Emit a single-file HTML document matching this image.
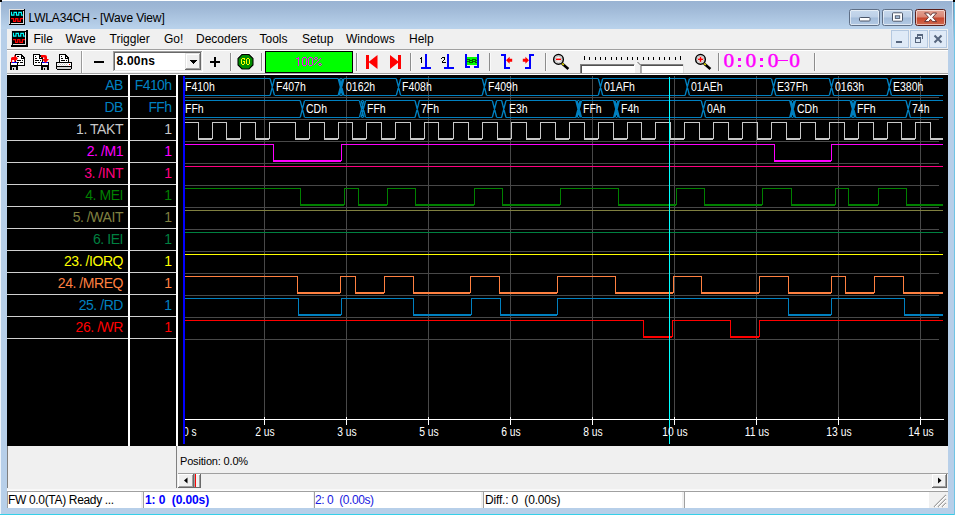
<!DOCTYPE html>
<html><head><meta charset="utf-8"><title>LWLA34CH - [Wave View]</title>
<style>

html,body{margin:0;padding:0;}
body{width:955px;height:515px;overflow:hidden;position:relative;background:#b7cfe9;font-family:"Liberation Sans",sans-serif;font-size:12px;color:#000;}
.abs{position:absolute;}
#title{left:0;top:0;width:955px;height:29px;background:linear-gradient(#98b2d2 0px,#9fb8d6 8px,#b9d2eb 28px);}
#titletxt{left:28.5px;top:10px;font-size:12px;line-height:16px;white-space:nowrap;letter-spacing:-0.14px;}
#menubar{left:7px;top:29px;width:941px;height:20px;background:#f0f0f0;}
.mi{position:absolute;top:32px;font-size:12px;line-height:14px;white-space:nowrap;}
#toolbar{left:7px;top:50px;width:941px;height:23px;background:#f0f0f0;}
.sep{position:absolute;top:53px;width:1px;height:18px;background:#8c8c8c;box-shadow:1px 0 0 #fafafa;}
#client{left:7px;top:75px;width:941px;height:371px;background:#000;}
.lbl{position:absolute;right:832px;font-size:14px;letter-spacing:-0.45px;line-height:16px;white-space:nowrap;text-align:right;}
.val{position:absolute;right:783.5px;font-size:14px;letter-spacing:-0.6px;line-height:16px;white-space:nowrap;text-align:right;}
.bt{position:absolute;font-size:12px;line-height:14px;color:#fff;white-space:nowrap;transform:scaleX(0.875);transform-origin:0 0;}
.tk{position:absolute;top:425px;width:60px;text-align:center;font-size:12px;line-height:14px;color:#fff;white-space:nowrap;transform:scaleX(0.86);transform-origin:50% 0;}
#below{left:7px;top:446px;width:941px;height:62px;background:#f0f0f0;}
.sf{position:absolute;top:491px;height:16px;background:#fff;border-top:1px solid #a0a0a0;border-left:1px solid #a0a0a0;box-sizing:border-box;height:17px;font-size:12px;line-height:17px;white-space:nowrap;overflow:hidden;}

</style></head><body>
<div class="abs" id="title"></div>
<div class="abs" style="left:0;top:0;width:955px;height:1px;background:#fdfeff"></div>
<div class="abs" style="left:0;top:0;width:1px;height:515px;background:#eef4fb"></div>
<div class="abs" style="left:0;top:514px;width:955px;height:1px;background:#35cfe8"></div>
<div class="abs" style="left:954px;top:0;width:1px;height:515px;background:#6fc4e4"></div>
<div class="abs" style="left:0;top:0;width:2px;height:2px;background:#000"></div>
<div class="abs" style="left:953px;top:0;width:2px;height:2px;background:#000"></div>
<svg class="abs" style="left:9px;top:9px" width="16" height="16" viewBox="0 0 16 16" shape-rendering="crispEdges"><rect x="0" y="0" width="16" height="16" fill="#000"/><rect x="0" y="0" width="15" height="1" fill="#e0e0e0"/><rect x="0" y="0" width="1" height="15" fill="#e0e0e0"/><rect x="14" y="2" width="1" height="13" fill="#e0e0e0"/><rect x="2" y="14" width="13" height="1" fill="#e0e0e0"/><path d="M2.5 2.8V6.1H4.97V3.3H7.45V6.1H9.78V3.3H12.4V6.1H13.9" stroke="#00ffff" stroke-width="1.15" fill="none" shape-rendering="auto"/><path d="M2 9.5H4.6V12.4H6.7V9.5H8.85V12.4H11.4V9.5H14" stroke="#ff0000" stroke-width="1.25" fill="none" shape-rendering="auto"/></svg>
<div class="abs" id="titletxt">LWLA34CH - [Wave View]</div>
<div class="abs" style="left:849px;top:9px;width:31px;height:17px;box-sizing:border-box;border:1px solid #5f6f86;border-radius:2.5px;background:linear-gradient(#c7d9ed 0,#bccfe6 48%,#a3bcda 52%,#b3cae4 100%);box-shadow:inset 0 0 0 1px rgba(255,255,255,.55)"></div>
<div class="abs" style="left:882px;top:9px;width:31px;height:17px;box-sizing:border-box;border:1px solid #5f6f86;border-radius:2.5px;background:linear-gradient(#c7d9ed 0,#bccfe6 48%,#a3bcda 52%,#b3cae4 100%);box-shadow:inset 0 0 0 1px rgba(255,255,255,.55)"></div>
<div class="abs" style="left:915px;top:9px;width:31px;height:17px;box-sizing:border-box;border:1px solid #5a1f1a;border-radius:2.5px;background:linear-gradient(#e3a394 0,#d98573 48%,#c8452b 52%,#cf6a50 100%);box-shadow:inset 0 0 0 1px rgba(255,255,255,.55)"></div>
<svg class="abs" style="left:849px;top:9px" width="97" height="17" viewBox="0 0 97 17"><rect x="10.5" y="8.5" width="10.5" height="3.5" rx="0.8" fill="#fff" stroke="#4a5568" stroke-width="1"/><rect x="43.5" y="3.8" width="10" height="8.4" rx="0.8" fill="#fff" stroke="#4a5568" stroke-width="1"/><rect x="46.3" y="6.8" width="4.4" height="2.6" fill="#a9c0dc" stroke="#4a5568" stroke-width="0.9"/><path d="M75.6 4l4 0l2 2.4l2-2.4l4 0l-3.9 4.3l3.9 4.3l-4 0l-2-2.4l-2 2.4l-4 0l3.9-4.3z" fill="#fff" stroke="#5a2a2a" stroke-width="0.9" stroke-linejoin="round"/></svg>
<div class="abs" style="left:953px;top:2px;width:1px;height:40px;background:linear-gradient(#6a88aa,#b7cfe9)"></div>
<div class="abs" style="left:952px;top:2px;width:1px;height:40px;background:linear-gradient(#dce8f5,#b7cfe9)"></div>
<div class="abs" id="menubar"></div>
<div class="abs" style="left:7px;top:49px;width:941px;height:1px;background:#a0a0a0"></div>
<svg class="abs" style="left:11px;top:30px" width="17" height="17" viewBox="0 0 17 17" shape-rendering="crispEdges"><rect x="0" y="0" width="17" height="17" fill="#000"/><rect x="0" y="0" width="15" height="1" fill="#e0e0e0"/><rect x="0" y="0" width="1" height="15" fill="#e0e0e0"/><rect x="14" y="2" width="1" height="13" fill="#e0e0e0"/><rect x="2" y="14" width="13" height="1" fill="#e0e0e0"/><path d="M2.5 2.8V6.1H4.97V3.3H7.45V6.1H9.78V3.3H12.4V6.1H13.9" stroke="#00ffff" stroke-width="1.15" fill="none" shape-rendering="auto"/><path d="M2 9.5H4.6V12.4H6.7V9.5H8.85V12.4H11.4V9.5H14" stroke="#ff0000" stroke-width="1.25" fill="none" shape-rendering="auto"/></svg>
<div class="mi" style="left:33.5px">File</div>
<div class="mi" style="left:65.5px">Wave</div>
<div class="mi" style="left:109.5px">Triggler</div>
<div class="mi" style="left:164px">Go!</div>
<div class="mi" style="left:196px">Decoders</div>
<div class="mi" style="left:259.5px">Tools</div>
<div class="mi" style="left:302px">Setup</div>
<div class="mi" style="left:346px">Windows</div>
<div class="mi" style="left:409px">Help</div>
<div class="abs" style="left:891px;top:30px;width:18px;height:18px;box-sizing:border-box;border:1px solid #b4c8e0;background:#dfeaf7"></div>
<div class="abs" style="left:910px;top:30px;width:18px;height:18px;box-sizing:border-box;border:1px solid #b4c8e0;background:#dfeaf7"></div>
<div class="abs" style="left:929px;top:30px;width:18px;height:18px;box-sizing:border-box;border:1px solid #b4c8e0;background:#dfeaf7"></div>
<svg class="abs" style="left:891px;top:30px" width="56" height="18" viewBox="0 0 56 18" shape-rendering="crispEdges"><rect x="5" y="11" width="6" height="2" fill="#56667e"/><rect x="26" y="4" width="6" height="2" fill="#56667e"/><rect x="31" y="4" width="1" height="5" fill="#56667e"/><rect x="26" y="4" width="1" height="3" fill="#56667e"/><rect x="24" y="7" width="6" height="2" fill="#56667e"/><rect x="24" y="7" width="1" height="6" fill="#56667e"/><rect x="29" y="7" width="1" height="6" fill="#56667e"/><rect x="24" y="12" width="6" height="1" fill="#56667e"/><path d="M43.5 5.5l7 7M50.5 5.5l-7 7" stroke="#56667e" stroke-width="2" shape-rendering="auto"/></svg>
<div class="abs" id="toolbar"></div>
<div class="abs" style="left:7px;top:50px;width:941px;height:1px;background:#fff"></div>
<div class="abs" style="left:7px;top:73px;width:941px;height:1px;background:#a0a0a0"></div>
<div class="abs" style="left:7px;top:74px;width:941px;height:1px;background:#fff"></div>
<div class="sep" style="left:81px;top:51px;height:22px;background:#9a9a9a;box-shadow:1px 0 0 #fff"></div>
<div class="sep" style="left:230px"></div>
<div class="sep" style="left:261px"></div>
<div class="sep" style="left:356px"></div>
<div class="sep" style="left:410px"></div>
<div class="sep" style="left:489px"></div>
<div class="sep" style="left:545px"></div>
<div class="sep" style="left:718px"></div>
<div class="sep" style="left:814px"></div>
<!-- toolbar icons -->
<svg class="abs" style="left:7px;top:50px" width="941" height="24" viewBox="7 50 941 24" shape-rendering="crispEdges">
<!-- icon1: load (floppy -> doc) -->
<g><path d="M15 54h6l4 4v8h-10z" fill="#fff" shape-rendering="auto"/><rect x="15" y="54" width="6" height="1" fill="#000"/><rect x="15" y="54" width="1" height="12" fill="#000"/><rect x="24" y="58" width="1" height="8" fill="#000"/><rect x="15" y="65" width="10" height="1" fill="#000"/><rect x="21" y="54" width="1" height="2" fill="#000"/><rect x="22" y="55" width="1" height="2" fill="#000"/><rect x="23" y="56" width="1" height="2" fill="#000"/><rect x="24" y="57" width="1" height="2" fill="#000"/><rect x="21" y="55" width="1" height="3" fill="#000"/><rect x="21" y="58" width="3" height="1" fill="#000"/><rect x="17" y="56" width="2" height="1" fill="#000"/><rect x="17" y="60" width="4" height="1" fill="#000"/><rect x="22" y="60" width="1" height="1" fill="#000"/><rect x="17" y="62" width="2" height="1" fill="#000"/><rect x="20" y="62" width="3" height="1" fill="#000"/><rect x="10" y="62" width="8" height="8" fill="#000"/><rect x="12" y="62" width="5" height="1" fill="#0000ff"/><rect x="11" y="63" width="6" height="2" fill="#fff"/><rect x="12" y="67" width="4" height="3" fill="#d8d8d8"/><rect x="13" y="68" width="1" height="2" fill="#000"/><rect x="12" y="60" width="2" height="2" fill="#fff"/><path d="M11 63V58.500Q11 57 12.500 57H14.200V54.800L18 58.600L14.200 62.500V60H12.200V62H11.900V63Z" fill="#ff0000" shape-rendering="auto"/></g>
<!-- icon2: save (doc -> floppy) -->
<g><path d="M33 54h6l4 4v8h-10z" fill="#fff" shape-rendering="auto"/><rect x="33" y="54" width="6" height="1" fill="#000"/><rect x="33" y="54" width="1" height="12" fill="#000"/><rect x="42" y="58" width="1" height="8" fill="#000"/><rect x="33" y="65" width="10" height="1" fill="#000"/><rect x="39" y="54" width="1" height="2" fill="#000"/><rect x="40" y="55" width="1" height="2" fill="#000"/><rect x="41" y="56" width="1" height="2" fill="#000"/><rect x="42" y="57" width="1" height="2" fill="#000"/><rect x="39" y="55" width="1" height="3" fill="#000"/><rect x="39" y="58" width="3" height="1" fill="#000"/><rect x="35" y="56" width="1" height="1" fill="#000"/><rect x="35" y="58" width="2" height="1" fill="#000"/><rect x="35" y="60" width="4" height="1" fill="#000"/><rect x="40" y="60" width="1" height="1" fill="#000"/><rect x="35" y="62" width="2" height="1" fill="#000"/><rect x="38" y="62" width="2" height="1" fill="#000"/><rect x="33" y="65" width="1" height="1" fill="#f0f0f0"/><rect x="41" y="62" width="8" height="8" fill="#000"/><rect x="42" y="62" width="6" height="1" fill="#0000ff"/><rect x="42" y="63" width="6" height="2" fill="#fff"/><rect x="43" y="67" width="4" height="3" fill="#d8d8d8"/><rect x="44" y="68" width="1" height="2" fill="#000"/><path d="M41 55H45Q47 55 47 57V59H49L45.500 63L42 59H44.300V57.600H41Z" fill="#ff0000" shape-rendering="auto"/></g>
<!-- icon3: print -->
<g><path d="M59 54h6l4 4v5h-10z" fill="#fff" shape-rendering="auto"/><rect x="59" y="54" width="6" height="1" fill="#000"/><rect x="59" y="54" width="1" height="9" fill="#000"/><rect x="68" y="58" width="1" height="5" fill="#000"/><rect x="59" y="62" width="10" height="1" fill="#000"/><rect x="65" y="54" width="1" height="2" fill="#000"/><rect x="66" y="55" width="1" height="2" fill="#000"/><rect x="67" y="56" width="1" height="2" fill="#000"/><rect x="68" y="57" width="1" height="2" fill="#000"/><rect x="65" y="55" width="1" height="3" fill="#000"/><rect x="65" y="58" width="3" height="1" fill="#000"/><rect x="61" y="56" width="1" height="1" fill="#000"/><rect x="61" y="58" width="2" height="1" fill="#000"/><rect x="61" y="60" width="4" height="1" fill="#000"/><rect x="66" y="60" width="1" height="1" fill="#000"/><rect x="56" y="62" width="16" height="8" fill="#000"/><rect x="57" y="63" width="14" height="3" fill="#fff"/><rect x="57" y="67" width="14" height="2" fill="#d4d4d4"/><rect x="58" y="64" width="1" height="1" fill="#c0c0c0"/><rect x="60" y="64" width="1" height="1" fill="#c0c0c0"/><rect x="62" y="64" width="1" height="1" fill="#c0c0c0"/><rect x="64" y="64" width="1" height="1" fill="#c0c0c0"/><rect x="66" y="64" width="1" height="1" fill="#c0c0c0"/><rect x="57" y="63" width="1" height="1" fill="#e4e4e4"/><rect x="57" y="65" width="1" height="1" fill="#e4e4e4"/><rect x="59" y="63" width="1" height="1" fill="#e4e4e4"/><rect x="59" y="65" width="1" height="1" fill="#e4e4e4"/><rect x="61" y="63" width="1" height="1" fill="#e4e4e4"/><rect x="61" y="65" width="1" height="1" fill="#e4e4e4"/><rect x="63" y="63" width="1" height="1" fill="#e4e4e4"/><rect x="63" y="65" width="1" height="1" fill="#e4e4e4"/><rect x="65" y="63" width="1" height="1" fill="#e4e4e4"/><rect x="65" y="65" width="1" height="1" fill="#e4e4e4"/><rect x="67" y="63" width="1" height="1" fill="#e4e4e4"/><rect x="67" y="65" width="1" height="1" fill="#e4e4e4"/><rect x="69" y="64" width="1" height="1" fill="#ff0000"/><rect x="56" y="69" width="1" height="1" fill="#f0f0f0"/><rect x="71" y="69" width="1" height="1" fill="#f0f0f0"/></g>
<!-- minus / plus -->
<rect x="94" y="61" width="10" height="2" fill="#000"/>
<rect x="210" y="61" width="10" height="2" fill="#000"/><rect x="214" y="57" width="2" height="10" fill="#000"/>
<!-- combo box -->
<rect x="113" y="51" width="90" height="21" fill="#fff"/>
<rect x="113" y="51" width="90" height="1" fill="#a0a0a0"/><rect x="113" y="51" width="1" height="21" fill="#a0a0a0"/>
<rect x="114" y="52" width="88" height="1" fill="#696969"/><rect x="114" y="52" width="1" height="19" fill="#696969"/>
<rect x="113" y="71" width="90" height="1" fill="#fff"/><rect x="202" y="51" width="1" height="21" fill="#fff"/>
<rect x="114" y="70" width="88" height="1" fill="#e3e3e3"/><rect x="201" y="52" width="1" height="19" fill="#e3e3e3"/>
<rect x="185" y="53" width="16" height="17" fill="#f0f0f0"/>
<rect x="185" y="53" width="16" height="1" fill="#e3e3e3"/><rect x="185" y="53" width="1" height="17" fill="#e3e3e3"/>
<rect x="186" y="54" width="14" height="1" fill="#fff"/><rect x="186" y="54" width="1" height="15" fill="#fff"/>
<rect x="185" y="69" width="16" height="1" fill="#696969"/><rect x="200" y="53" width="1" height="17" fill="#696969"/>
<rect x="186" y="68" width="14" height="1" fill="#a0a0a0"/><rect x="199" y="54" width="1" height="15" fill="#a0a0a0"/>
<rect x="190" y="60" width="7" height="1" fill="#000"/><rect x="191" y="61" width="5" height="1" fill="#000"/><rect x="192" y="62" width="3" height="1" fill="#000"/><rect x="193" y="63" width="1" height="1" fill="#000"/>
<!-- GO -->
<path d="M241.800 53.500h7.400l4.300 4.300v7.400l-4.300 4.300h-7.400l-4.300-4.300v-7.400z" fill="none" stroke="#fff" stroke-width="1" shape-rendering="auto"/>
<path d="M242 54.500h7l4 4v6.500l-4 4h-7l-4-4v-6.500z" fill="#008c00" stroke="#000" stroke-width="1.100" shape-rendering="auto"/>
<g fill="#ffff00"><rect x="242" y="58" width="3" height="1"/><rect x="241" y="59" width="1" height="5"/><rect x="242" y="64" width="2" height="1"/><rect x="244" y="61" width="1" height="3"/><rect x="243" y="61" width="1" height="1"/><rect x="244" y="59" width="1" height="1"/><rect x="247" y="58" width="2" height="1"/><rect x="246" y="59" width="1" height="5"/><rect x="249" y="59" width="1" height="5"/><rect x="247" y="64" width="2" height="1"/></g>
<!-- progress -->
<rect x="265" y="51" width="88" height="22" fill="#000"/><rect x="266" y="52" width="86" height="20" fill="#00ff00"/>
<!-- red arrows -->
<rect x="366" y="55" width="3" height="14" fill="#ff0000"/>
<path d="M377.500 55v14l-9-7z" fill="#ff0000" shape-rendering="auto"/>
<rect x="398" y="55" width="3" height="14" fill="#ff0000"/>
<path d="M390 55v14l9-7z" fill="#ff0000" shape-rendering="auto"/>
<!-- cursor 1 / 2 -->
<rect x="425" y="54" width="2" height="14" fill="#0000ff"/><rect x="421" y="67" width="10" height="2" fill="#0000ff"/>
<rect x="421" y="57" width="1" height="6" fill="#000"/><rect x="420" y="58" width="1" height="1" fill="#000"/>
<rect x="447" y="54" width="2" height="14" fill="#0000ff"/><rect x="444" y="67" width="10" height="2" fill="#0000ff"/>
<rect x="442" y="57" width="3" height="1" fill="#000"/><rect x="444" y="58" width="1" height="2" fill="#000"/><rect x="443" y="60" width="1" height="1" fill="#000"/><rect x="442" y="61" width="1" height="1" fill="#000"/><rect x="442" y="62" width="4" height="1" fill="#000"/><rect x="441" y="58" width="1" height="1" fill="#000"/>
<!-- bracket w/ green -->
<rect x="465" y="54" width="2" height="14" fill="#0000ff"/><rect x="477" y="54" width="2" height="14" fill="#0000ff"/>
<rect x="465" y="66" width="5" height="2" fill="#0000ff"/><rect x="474" y="66" width="5" height="2" fill="#0000ff"/>
<rect x="467" y="57" width="10" height="8" fill="#00ff00"/>
<path d="M467 59.500h2l1 1h2l1-1h2l1 1h1M467 61.500h2l1 1h2l1-1h2l1 1h1" stroke="#006000" stroke-width="1" fill="none"/>
<!-- [<-  ->] -->
<rect x="504" y="54" width="2" height="15" fill="#0000ff"/><rect x="501" y="54" width="5" height="2" fill="#0000ff"/><rect x="504" y="67" width="6" height="2" fill="#0000ff"/>
<path d="M506 60.300l3.600-3.500v2h2.600v3h-2.600v2z" fill="#ff0000" shape-rendering="auto"/>
<rect x="529" y="54" width="2" height="15" fill="#0000ff"/><rect x="529" y="54" width="5" height="2" fill="#0000ff"/><rect x="525" y="67" width="6" height="2" fill="#0000ff"/>
<path d="M529 60.300l-3.600-3.500v2h-2.600v3h2.600v2z" fill="#ff0000" shape-rendering="auto"/>
<!-- magnifiers -->
<g shape-rendering="auto">
<path d="M562 63.600l6.400 5.400" stroke="#000" stroke-width="2.600"/><path d="M562 63.300l1.800 1.500" stroke="#e8e000" stroke-width="1.600"/>
<circle cx="558.500" cy="59.400" r="4.800" fill="#f4f4f4" stroke="#000" stroke-width="1.500"/><circle cx="558.500" cy="59.400" r="3.300" fill="none" stroke="#b8b8b8" stroke-width="0.900"/>
<rect x="556" y="58.600" width="5" height="1.500" fill="#ff0000"/>
<path d="M704 63.600l6.400 5.400" stroke="#000" stroke-width="2.600"/><path d="M704 63.300l1.800 1.500" stroke="#e8e000" stroke-width="1.600"/>
<circle cx="700.500" cy="59.400" r="4.800" fill="#f4f4f4" stroke="#000" stroke-width="1.500"/><circle cx="700.500" cy="59.400" r="3.300" fill="none" stroke="#b8b8b8" stroke-width="0.900"/>
<rect x="698" y="58.600" width="5" height="1.500" fill="#ff0000"/><rect x="699.750" y="56.900" width="1.500" height="5" fill="#ff0000"/>
</g>
<!-- slider -->
<g id="ticks"><rect x="584" y="56" width="1" height="4" fill="#000"/><rect x="589" y="57" width="1" height="3" fill="#000"/><rect x="595" y="57" width="1" height="3" fill="#000"/><rect x="600" y="57" width="1" height="3" fill="#000"/><rect x="605" y="57" width="1" height="3" fill="#000"/><rect x="611" y="57" width="1" height="3" fill="#000"/><rect x="616" y="57" width="1" height="3" fill="#000"/><rect x="621" y="57" width="1" height="3" fill="#000"/><rect x="627" y="57" width="1" height="3" fill="#000"/><rect x="632" y="57" width="1" height="3" fill="#000"/><rect x="637" y="57" width="1" height="3" fill="#000"/><rect x="643" y="57" width="1" height="3" fill="#000"/><rect x="648" y="57" width="1" height="3" fill="#000"/><rect x="653" y="57" width="1" height="3" fill="#000"/><rect x="659" y="57" width="1" height="3" fill="#000"/><rect x="664" y="57" width="1" height="3" fill="#000"/><rect x="669" y="57" width="1" height="3" fill="#000"/><rect x="675" y="57" width="1" height="3" fill="#000"/><rect x="680" y="56" width="1" height="4" fill="#000"/></g>
<rect x="580" y="64" width="104" height="9" fill="#fff"/>
<rect x="580" y="64" width="104" height="1" fill="#808080"/><rect x="580" y="64" width="1" height="9" fill="#808080"/>
<rect x="581" y="65" width="102" height="1" fill="#505050"/><rect x="581" y="65" width="1" height="8" fill="#505050"/>
<rect x="683" y="64" width="1" height="9" fill="#e0e0e0"/>
<path d="M634 65l3.500-3.500l3.500 3.500v8h-7z" fill="#f0f0f0" shape-rendering="auto"/>
<path d="M634.500 73v-8l3-3" stroke="#fff" stroke-width="1" fill="none" shape-rendering="auto"/>
<path d="M637.500 62l3.500 3.500v7.500" stroke="#606060" stroke-width="1" fill="none" shape-rendering="auto"/>
</svg>
<div class="abs" style="left:116.500px;top:54px;font-size:12px;line-height:14px;font-weight:bold;white-space:nowrap;letter-spacing:0.200px;">8.00ns</div>

<svg class="abs" style="left:290px;top:55px" width="40" height="14" viewBox="290 55 40 14" shape-rendering="crispEdges"><g fill="#ff00ff"><rect x="298" y="57" width="1" height="9"/><rect x="296" y="58" width="2" height="1"/><rect x="303" y="57" width="3" height="1"/><rect x="303" y="65" width="3" height="1"/><rect x="302" y="58" width="1" height="7"/><rect x="306" y="58" width="1" height="7"/><rect x="309" y="57" width="3" height="1"/><rect x="309" y="65" width="3" height="1"/><rect x="308" y="58" width="1" height="7"/><rect x="312" y="58" width="1" height="7"/><rect x="315" y="57" width="2" height="1"/><rect x="314" y="58" width="1" height="1"/><rect x="317" y="58" width="1" height="1"/><rect x="315" y="59" width="2" height="1"/><rect x="320" y="58" width="1" height="1"/><rect x="319" y="59" width="1" height="1"/><rect x="318" y="60" width="1" height="1"/><rect x="317" y="61" width="1" height="1"/><rect x="316" y="62" width="1" height="1"/><rect x="315" y="63" width="1" height="1"/><rect x="314" y="64" width="1" height="1"/><rect x="319" y="63" width="2" height="1"/><rect x="318" y="64" width="1" height="1"/><rect x="321" y="64" width="1" height="1"/><rect x="319" y="65" width="2" height="1"/></g></svg>
<svg class="abs" style="left:720px;top:50px" width="90" height="24" viewBox="720 50 90 24">
<g font-family="Liberation Serif, serif" font-size="19.3" fill="#ff00ff" stroke="#ff00ff" stroke-width="0.450">
<text x="723.600" y="67.200" textLength="10.700" lengthAdjust="spacingAndGlyphs">0</text>
<text x="745.600" y="67.200" textLength="10.700" lengthAdjust="spacingAndGlyphs">0</text>
<text x="767.800" y="67.200" textLength="10.700" lengthAdjust="spacingAndGlyphs">0</text>
<text x="789.200" y="67.200" textLength="10.700" lengthAdjust="spacingAndGlyphs">0</text>
</g>
<g fill="#ff00ff" shape-rendering="crispEdges">
<rect x="738" y="58" width="3" height="2.5"/><rect x="738" y="65" width="3" height="2"/>
<rect x="760" y="58" width="3" height="2.5"/><rect x="760" y="65" width="3" height="2"/>
<rect x="778" y="60" width="10" height="1"/>
</g></svg>

<div class="abs" id="client"></div>
<svg class="abs" style="left:0;top:0" width="955" height="515" viewBox="0 0 955 515" shape-rendering="crispEdges"><rect x="7" y="96" width="170" height="1" fill="#d0d0d0"/><rect x="7" y="118" width="170" height="1" fill="#d0d0d0"/><rect x="7" y="140" width="170" height="1" fill="#d0d0d0"/><rect x="7" y="162" width="170" height="1" fill="#d0d0d0"/><rect x="7" y="184" width="170" height="1" fill="#d0d0d0"/><rect x="7" y="206" width="170" height="1" fill="#d0d0d0"/><rect x="7" y="228" width="170" height="1" fill="#d0d0d0"/><rect x="7" y="250" width="170" height="1" fill="#d0d0d0"/><rect x="7" y="272" width="170" height="1" fill="#d0d0d0"/><rect x="7" y="294" width="170" height="1" fill="#d0d0d0"/><rect x="7" y="316" width="170" height="1" fill="#d0d0d0"/><rect x="7" y="338" width="170" height="1" fill="#d0d0d0"/><rect x="128" y="75" width="2" height="371" fill="#ffffff"/><rect x="176" y="75" width="2" height="371" fill="#ffffff"/>
<rect x="264" y="76" width="1" height="343" fill="#484848"/>
<rect x="346" y="76" width="1" height="343" fill="#484848"/>
<rect x="428" y="76" width="1" height="343" fill="#484848"/>
<rect x="510" y="76" width="1" height="343" fill="#484848"/>
<rect x="592" y="76" width="1" height="343" fill="#484848"/>
<rect x="674" y="76" width="1" height="343" fill="#484848"/>
<rect x="756" y="76" width="1" height="343" fill="#484848"/>
<rect x="838" y="76" width="1" height="343" fill="#484848"/>
<rect x="920" y="76" width="1" height="343" fill="#484848"/>
<rect x="185" y="97" width="754" height="1" fill="#484848"/>
<rect x="185" y="119" width="754" height="1" fill="#484848"/>
<rect x="185" y="141" width="754" height="1" fill="#484848"/>
<rect x="185" y="163" width="754" height="1" fill="#484848"/>
<rect x="185" y="185" width="754" height="1" fill="#484848"/>
<rect x="185" y="207" width="754" height="1" fill="#484848"/>
<rect x="185" y="229" width="754" height="1" fill="#484848"/>
<rect x="185" y="251" width="754" height="1" fill="#484848"/>
<rect x="185" y="273" width="754" height="1" fill="#484848"/>
<rect x="185" y="295" width="754" height="1" fill="#484848"/>
<rect x="185" y="317" width="754" height="1" fill="#484848"/>
<rect x="185" y="339" width="754" height="1" fill="#484848"/>
<rect x="185" y="78" width="85.1" height="1" fill="#0080c0"/>
<rect x="185" y="95" width="85.1" height="1" fill="#0080c0"/>
<rect x="274.5" y="78" width="63.7" height="1" fill="#0080c0"/>
<rect x="274.5" y="95" width="63.7" height="1" fill="#0080c0"/>
<rect x="340.4" y="78" width="1.3" height="1" fill="#0080c0"/>
<rect x="340.4" y="95" width="1.3" height="1" fill="#0080c0"/>
<path d="M339.5 82L342.6 82L341.9 87L342.6 92L339.5 92L340.2 87Z" fill="#0080c0" shape-rendering="auto"/>
<rect x="343.9" y="78" width="52.4" height="1" fill="#0080c0"/>
<rect x="343.9" y="95" width="52.4" height="1" fill="#0080c0"/>
<rect x="400.7" y="78" width="81.5" height="1" fill="#0080c0"/>
<rect x="400.7" y="95" width="81.5" height="1" fill="#0080c0"/>
<rect x="486.6" y="78" width="111.7" height="1" fill="#0080c0"/>
<rect x="486.6" y="95" width="111.7" height="1" fill="#0080c0"/>
<rect x="602.7" y="78" width="82.4" height="1" fill="#0080c0"/>
<rect x="602.7" y="95" width="82.4" height="1" fill="#0080c0"/>
<rect x="689.5" y="78" width="81.9" height="1" fill="#0080c0"/>
<rect x="689.5" y="95" width="81.9" height="1" fill="#0080c0"/>
<rect x="775.8" y="78" width="53.5" height="1" fill="#0080c0"/>
<rect x="775.8" y="95" width="53.5" height="1" fill="#0080c0"/>
<rect x="833.7" y="78" width="53.4" height="1" fill="#0080c0"/>
<rect x="833.7" y="95" width="53.4" height="1" fill="#0080c0"/>
<rect x="891.5" y="78" width="51.5" height="1" fill="#0080c0"/>
<rect x="891.5" y="95" width="51.5" height="1" fill="#0080c0"/>
<path d="M270.1 78.5L274.5 95.5M270.1 95.5L274.5 78.5M338.2 78.5L342.6 95.5M338.2 95.5L342.6 78.5M339.5 78.5L343.9 95.5M339.5 95.5L343.9 78.5M396.3 78.5L400.7 95.5M396.3 95.5L400.7 78.5M482.2 78.5L486.6 95.5M482.2 95.5L486.6 78.5M598.3 78.5L602.7 95.5M598.3 95.5L602.7 78.5M685.1 78.5L689.5 95.5M685.1 95.5L689.5 78.5M771.4 78.5L775.8 95.5M771.4 95.5L775.8 78.5M829.3 78.5L833.7 95.5M829.3 95.5L833.7 78.5M887.1 78.5L891.5 95.5M887.1 95.5L891.5 78.5" stroke="#0080c0" stroke-width="1.3" fill="none" shape-rendering="auto"/>
<rect x="185" y="100" width="115.2" height="1" fill="#0080c0"/>
<rect x="185" y="117" width="115.2" height="1" fill="#0080c0"/>
<rect x="304.6" y="100" width="54.8" height="1" fill="#0080c0"/>
<rect x="304.6" y="117" width="54.8" height="1" fill="#0080c0"/>
<rect x="361.6" y="100" width="1.8" height="1" fill="#0080c0"/>
<rect x="361.6" y="117" width="1.8" height="1" fill="#0080c0"/>
<rect x="365.6" y="100" width="49.4" height="1" fill="#0080c0"/>
<rect x="365.6" y="117" width="49.4" height="1" fill="#0080c0"/>
<rect x="419.4" y="100" width="72.9" height="1" fill="#0080c0"/>
<rect x="419.4" y="117" width="72.9" height="1" fill="#0080c0"/>
<rect x="496.7" y="100" width="4.9" height="1" fill="#0080c0"/>
<rect x="496.7" y="117" width="4.9" height="1" fill="#0080c0"/>
<rect x="506" y="100" width="69.8" height="1" fill="#0080c0"/>
<rect x="506" y="117" width="69.8" height="1" fill="#0080c0"/>
<rect x="578" y="100" width="1.3" height="1" fill="#0080c0"/>
<rect x="578" y="117" width="1.3" height="1" fill="#0080c0"/>
<path d="M577.1 104L580.2 104L579.5 109L580.2 114L577.1 114L577.8 109Z" fill="#0080c0" shape-rendering="auto"/>
<rect x="581.5" y="100" width="32.1" height="1" fill="#0080c0"/>
<rect x="581.5" y="117" width="32.1" height="1" fill="#0080c0"/>
<rect x="615.8" y="100" width="1.3" height="1" fill="#0080c0"/>
<rect x="615.8" y="117" width="1.3" height="1" fill="#0080c0"/>
<path d="M614.9 104L618.0 104L617.3 109L618.0 114L614.9 114L615.6 109Z" fill="#0080c0" shape-rendering="auto"/>
<rect x="619.3" y="100" width="81.9" height="1" fill="#0080c0"/>
<rect x="619.3" y="117" width="81.9" height="1" fill="#0080c0"/>
<rect x="705.6" y="100" width="84.1" height="1" fill="#0080c0"/>
<rect x="705.6" y="117" width="84.1" height="1" fill="#0080c0"/>
<rect x="791.9" y="100" width="1.3" height="1" fill="#0080c0"/>
<rect x="791.9" y="117" width="1.3" height="1" fill="#0080c0"/>
<path d="M791.0 104L794.1 104L793.4 109L794.1 114L791.0 114L791.7 109Z" fill="#0080c0" shape-rendering="auto"/>
<rect x="795.4" y="100" width="54.8" height="1" fill="#0080c0"/>
<rect x="795.4" y="117" width="54.8" height="1" fill="#0080c0"/>
<rect x="852.4" y="100" width="1.3" height="1" fill="#0080c0"/>
<rect x="852.4" y="117" width="1.3" height="1" fill="#0080c0"/>
<path d="M851.5 104L854.6 104L853.9 109L854.6 114L851.5 114L852.2 109Z" fill="#0080c0" shape-rendering="auto"/>
<rect x="855.9" y="100" width="50.1" height="1" fill="#0080c0"/>
<rect x="855.9" y="117" width="50.1" height="1" fill="#0080c0"/>
<rect x="910.4" y="100" width="32.6" height="1" fill="#0080c0"/>
<rect x="910.4" y="117" width="32.6" height="1" fill="#0080c0"/>
<path d="M300.2 100.5L304.6 117.5M300.2 117.5L304.6 100.5M359.4 100.5L363.8 117.5M359.4 117.5L363.8 100.5M361.2 100.5L365.6 117.5M361.2 117.5L365.6 100.5M415.0 100.5L419.4 117.5M415.0 117.5L419.4 100.5M492.3 100.5L496.7 117.5M492.3 117.5L496.7 100.5M501.6 100.5L506.0 117.5M501.6 117.5L506.0 100.5M575.8 100.5L580.2 117.5M575.8 117.5L580.2 100.5M577.1 100.5L581.5 117.5M577.1 117.5L581.5 100.5M613.6 100.5L618.0 117.5M613.6 117.5L618.0 100.5M614.9 100.5L619.3 117.5M614.9 117.5L619.3 100.5M701.2 100.5L705.6 117.5M701.2 117.5L705.6 100.5M789.7 100.5L794.1 117.5M789.7 117.5L794.1 100.5M791.0 100.5L795.4 117.5M791.0 117.5L795.4 100.5M850.2 100.5L854.6 117.5M850.2 117.5L854.6 100.5M851.5 100.5L855.9 117.5M851.5 117.5L855.9 100.5M906.0 100.5L910.4 117.5M906.0 117.5L910.4 100.5" stroke="#0080c0" stroke-width="1.3" fill="none" shape-rendering="auto"/>
<rect x="185" y="122" width="14" height="1" fill="#c8c8c8"/>
<rect x="198" y="122" width="1" height="18" fill="#c8c8c8"/>
<rect x="198" y="138" width="15" height="1" fill="#c8c8c8"/>
<rect x="198" y="139" width="14" height="1" fill="#c8c8c8"/>
<rect x="212" y="122" width="1" height="17" fill="#c8c8c8"/>
<rect x="212" y="122" width="15" height="1" fill="#c8c8c8"/>
<rect x="226" y="122" width="1" height="18" fill="#c8c8c8"/>
<rect x="226" y="138" width="15" height="1" fill="#c8c8c8"/>
<rect x="226" y="139" width="14" height="1" fill="#c8c8c8"/>
<rect x="240" y="122" width="1" height="17" fill="#c8c8c8"/>
<rect x="240" y="122" width="16" height="1" fill="#c8c8c8"/>
<rect x="255" y="122" width="1" height="18" fill="#c8c8c8"/>
<rect x="255" y="138" width="15" height="1" fill="#c8c8c8"/>
<rect x="255" y="139" width="14" height="1" fill="#c8c8c8"/>
<rect x="269" y="122" width="1" height="17" fill="#c8c8c8"/>
<rect x="269" y="122" width="27" height="1" fill="#c8c8c8"/>
<rect x="295" y="122" width="1" height="18" fill="#c8c8c8"/>
<rect x="295" y="138" width="15" height="1" fill="#c8c8c8"/>
<rect x="295" y="139" width="14" height="1" fill="#c8c8c8"/>
<rect x="309" y="122" width="1" height="17" fill="#c8c8c8"/>
<rect x="309" y="122" width="16" height="1" fill="#c8c8c8"/>
<rect x="324" y="122" width="1" height="18" fill="#c8c8c8"/>
<rect x="324" y="138" width="15" height="1" fill="#c8c8c8"/>
<rect x="324" y="139" width="14" height="1" fill="#c8c8c8"/>
<rect x="338" y="122" width="1" height="17" fill="#c8c8c8"/>
<rect x="338" y="122" width="15" height="1" fill="#c8c8c8"/>
<rect x="352" y="122" width="1" height="18" fill="#c8c8c8"/>
<rect x="352" y="138" width="15" height="1" fill="#c8c8c8"/>
<rect x="352" y="139" width="14" height="1" fill="#c8c8c8"/>
<rect x="366" y="122" width="1" height="17" fill="#c8c8c8"/>
<rect x="366" y="122" width="16" height="1" fill="#c8c8c8"/>
<rect x="381" y="122" width="1" height="18" fill="#c8c8c8"/>
<rect x="381" y="138" width="15" height="1" fill="#c8c8c8"/>
<rect x="381" y="139" width="14" height="1" fill="#c8c8c8"/>
<rect x="395" y="122" width="1" height="17" fill="#c8c8c8"/>
<rect x="395" y="122" width="16" height="1" fill="#c8c8c8"/>
<rect x="410" y="122" width="1" height="18" fill="#c8c8c8"/>
<rect x="410" y="138" width="15" height="1" fill="#c8c8c8"/>
<rect x="410" y="139" width="14" height="1" fill="#c8c8c8"/>
<rect x="424" y="122" width="1" height="17" fill="#c8c8c8"/>
<rect x="424" y="122" width="15" height="1" fill="#c8c8c8"/>
<rect x="438" y="122" width="1" height="18" fill="#c8c8c8"/>
<rect x="438" y="138" width="16" height="1" fill="#c8c8c8"/>
<rect x="438" y="139" width="15" height="1" fill="#c8c8c8"/>
<rect x="453" y="122" width="1" height="17" fill="#c8c8c8"/>
<rect x="453" y="122" width="16" height="1" fill="#c8c8c8"/>
<rect x="468" y="122" width="1" height="18" fill="#c8c8c8"/>
<rect x="468" y="138" width="15" height="1" fill="#c8c8c8"/>
<rect x="468" y="139" width="14" height="1" fill="#c8c8c8"/>
<rect x="482" y="122" width="1" height="17" fill="#c8c8c8"/>
<rect x="482" y="122" width="16" height="1" fill="#c8c8c8"/>
<rect x="497" y="122" width="1" height="18" fill="#c8c8c8"/>
<rect x="497" y="138" width="15" height="1" fill="#c8c8c8"/>
<rect x="497" y="139" width="14" height="1" fill="#c8c8c8"/>
<rect x="511" y="122" width="1" height="17" fill="#c8c8c8"/>
<rect x="511" y="122" width="16" height="1" fill="#c8c8c8"/>
<rect x="526" y="122" width="1" height="18" fill="#c8c8c8"/>
<rect x="526" y="138" width="15" height="1" fill="#c8c8c8"/>
<rect x="526" y="139" width="14" height="1" fill="#c8c8c8"/>
<rect x="540" y="122" width="1" height="17" fill="#c8c8c8"/>
<rect x="540" y="122" width="16" height="1" fill="#c8c8c8"/>
<rect x="555" y="122" width="1" height="18" fill="#c8c8c8"/>
<rect x="555" y="138" width="15" height="1" fill="#c8c8c8"/>
<rect x="555" y="139" width="14" height="1" fill="#c8c8c8"/>
<rect x="569" y="122" width="1" height="17" fill="#c8c8c8"/>
<rect x="569" y="122" width="16" height="1" fill="#c8c8c8"/>
<rect x="584" y="122" width="1" height="18" fill="#c8c8c8"/>
<rect x="584" y="138" width="15" height="1" fill="#c8c8c8"/>
<rect x="584" y="139" width="14" height="1" fill="#c8c8c8"/>
<rect x="598" y="122" width="1" height="17" fill="#c8c8c8"/>
<rect x="598" y="122" width="16" height="1" fill="#c8c8c8"/>
<rect x="613" y="122" width="1" height="18" fill="#c8c8c8"/>
<rect x="613" y="138" width="15" height="1" fill="#c8c8c8"/>
<rect x="613" y="139" width="14" height="1" fill="#c8c8c8"/>
<rect x="627" y="122" width="1" height="17" fill="#c8c8c8"/>
<rect x="627" y="122" width="15" height="1" fill="#c8c8c8"/>
<rect x="641" y="122" width="1" height="18" fill="#c8c8c8"/>
<rect x="641" y="138" width="15" height="1" fill="#c8c8c8"/>
<rect x="641" y="139" width="14" height="1" fill="#c8c8c8"/>
<rect x="655" y="122" width="1" height="17" fill="#c8c8c8"/>
<rect x="655" y="122" width="16" height="1" fill="#c8c8c8"/>
<rect x="670" y="122" width="1" height="18" fill="#c8c8c8"/>
<rect x="670" y="138" width="15" height="1" fill="#c8c8c8"/>
<rect x="670" y="139" width="14" height="1" fill="#c8c8c8"/>
<rect x="684" y="122" width="1" height="17" fill="#c8c8c8"/>
<rect x="684" y="122" width="16" height="1" fill="#c8c8c8"/>
<rect x="699" y="122" width="1" height="18" fill="#c8c8c8"/>
<rect x="699" y="138" width="15" height="1" fill="#c8c8c8"/>
<rect x="699" y="139" width="14" height="1" fill="#c8c8c8"/>
<rect x="713" y="122" width="1" height="17" fill="#c8c8c8"/>
<rect x="713" y="122" width="16" height="1" fill="#c8c8c8"/>
<rect x="728" y="122" width="1" height="18" fill="#c8c8c8"/>
<rect x="728" y="138" width="15" height="1" fill="#c8c8c8"/>
<rect x="728" y="139" width="14" height="1" fill="#c8c8c8"/>
<rect x="742" y="122" width="1" height="17" fill="#c8c8c8"/>
<rect x="742" y="122" width="16" height="1" fill="#c8c8c8"/>
<rect x="757" y="122" width="1" height="18" fill="#c8c8c8"/>
<rect x="757" y="138" width="15" height="1" fill="#c8c8c8"/>
<rect x="757" y="139" width="14" height="1" fill="#c8c8c8"/>
<rect x="771" y="122" width="1" height="17" fill="#c8c8c8"/>
<rect x="771" y="122" width="16" height="1" fill="#c8c8c8"/>
<rect x="786" y="122" width="1" height="18" fill="#c8c8c8"/>
<rect x="786" y="138" width="15" height="1" fill="#c8c8c8"/>
<rect x="786" y="139" width="14" height="1" fill="#c8c8c8"/>
<rect x="800" y="122" width="1" height="17" fill="#c8c8c8"/>
<rect x="800" y="122" width="16" height="1" fill="#c8c8c8"/>
<rect x="815" y="122" width="1" height="18" fill="#c8c8c8"/>
<rect x="815" y="138" width="15" height="1" fill="#c8c8c8"/>
<rect x="815" y="139" width="14" height="1" fill="#c8c8c8"/>
<rect x="829" y="122" width="1" height="17" fill="#c8c8c8"/>
<rect x="829" y="122" width="16" height="1" fill="#c8c8c8"/>
<rect x="844" y="122" width="1" height="18" fill="#c8c8c8"/>
<rect x="844" y="138" width="15" height="1" fill="#c8c8c8"/>
<rect x="844" y="139" width="14" height="1" fill="#c8c8c8"/>
<rect x="858" y="122" width="1" height="17" fill="#c8c8c8"/>
<rect x="858" y="122" width="16" height="1" fill="#c8c8c8"/>
<rect x="873" y="122" width="1" height="18" fill="#c8c8c8"/>
<rect x="873" y="138" width="15" height="1" fill="#c8c8c8"/>
<rect x="873" y="139" width="14" height="1" fill="#c8c8c8"/>
<rect x="887" y="122" width="1" height="17" fill="#c8c8c8"/>
<rect x="887" y="122" width="15" height="1" fill="#c8c8c8"/>
<rect x="901" y="122" width="1" height="18" fill="#c8c8c8"/>
<rect x="901" y="138" width="15" height="1" fill="#c8c8c8"/>
<rect x="901" y="139" width="14" height="1" fill="#c8c8c8"/>
<rect x="915" y="122" width="1" height="17" fill="#c8c8c8"/>
<rect x="915" y="122" width="16" height="1" fill="#c8c8c8"/>
<rect x="930" y="122" width="1" height="18" fill="#c8c8c8"/>
<rect x="930" y="138" width="13" height="1" fill="#c8c8c8"/>
<rect x="930" y="139" width="13" height="1" fill="#c8c8c8"/>
<rect x="185" y="144" width="89" height="1" fill="#ff00ff"/>
<rect x="273" y="144" width="1" height="18" fill="#ff00ff"/>
<rect x="273" y="160" width="69" height="1" fill="#ff00ff"/>
<rect x="273" y="161" width="68" height="1" fill="#ff00ff"/>
<rect x="341" y="144" width="1" height="17" fill="#ff00ff"/>
<rect x="341" y="144" width="434" height="1" fill="#ff00ff"/>
<rect x="774" y="144" width="1" height="18" fill="#ff00ff"/>
<rect x="774" y="160" width="58" height="1" fill="#ff00ff"/>
<rect x="774" y="161" width="57" height="1" fill="#ff00ff"/>
<rect x="831" y="144" width="1" height="17" fill="#ff00ff"/>
<rect x="831" y="144" width="112" height="1" fill="#ff00ff"/>
<rect x="185" y="166" width="758" height="1" fill="#ff0080"/>
<rect x="185" y="188" width="116" height="1" fill="#008000"/>
<rect x="300" y="188" width="1" height="18" fill="#008000"/>
<rect x="300" y="204" width="45" height="1" fill="#008000"/>
<rect x="300" y="205" width="44" height="1" fill="#008000"/>
<rect x="344" y="188" width="1" height="17" fill="#008000"/>
<rect x="344" y="188" width="15" height="1" fill="#008000"/>
<rect x="358" y="188" width="1" height="18" fill="#008000"/>
<rect x="358" y="204" width="30" height="1" fill="#008000"/>
<rect x="358" y="205" width="29" height="1" fill="#008000"/>
<rect x="387" y="188" width="1" height="17" fill="#008000"/>
<rect x="387" y="188" width="29" height="1" fill="#008000"/>
<rect x="415" y="188" width="1" height="18" fill="#008000"/>
<rect x="415" y="204" width="60" height="1" fill="#008000"/>
<rect x="415" y="205" width="59" height="1" fill="#008000"/>
<rect x="474" y="188" width="1" height="17" fill="#008000"/>
<rect x="474" y="188" width="29" height="1" fill="#008000"/>
<rect x="502" y="188" width="1" height="18" fill="#008000"/>
<rect x="502" y="204" width="59" height="1" fill="#008000"/>
<rect x="502" y="205" width="58" height="1" fill="#008000"/>
<rect x="560" y="188" width="1" height="17" fill="#008000"/>
<rect x="560" y="188" width="59" height="1" fill="#008000"/>
<rect x="618" y="188" width="1" height="18" fill="#008000"/>
<rect x="618" y="204" width="59" height="1" fill="#008000"/>
<rect x="618" y="205" width="58" height="1" fill="#008000"/>
<rect x="676" y="188" width="1" height="17" fill="#008000"/>
<rect x="676" y="188" width="29" height="1" fill="#008000"/>
<rect x="704" y="188" width="1" height="18" fill="#008000"/>
<rect x="704" y="204" width="59" height="1" fill="#008000"/>
<rect x="704" y="205" width="58" height="1" fill="#008000"/>
<rect x="762" y="188" width="1" height="17" fill="#008000"/>
<rect x="762" y="188" width="30" height="1" fill="#008000"/>
<rect x="791" y="188" width="1" height="18" fill="#008000"/>
<rect x="791" y="204" width="45" height="1" fill="#008000"/>
<rect x="791" y="205" width="44" height="1" fill="#008000"/>
<rect x="835" y="188" width="1" height="17" fill="#008000"/>
<rect x="835" y="188" width="14" height="1" fill="#008000"/>
<rect x="848" y="188" width="1" height="18" fill="#008000"/>
<rect x="848" y="204" width="31" height="1" fill="#008000"/>
<rect x="848" y="205" width="30" height="1" fill="#008000"/>
<rect x="878" y="188" width="1" height="17" fill="#008000"/>
<rect x="878" y="188" width="29" height="1" fill="#008000"/>
<rect x="906" y="188" width="1" height="18" fill="#008000"/>
<rect x="906" y="204" width="37" height="1" fill="#008000"/>
<rect x="906" y="205" width="37" height="1" fill="#008000"/>
<rect x="185" y="210" width="758" height="1" fill="#808040"/>
<rect x="185" y="232" width="758" height="1" fill="#008040"/>
<rect x="185" y="254" width="758" height="1" fill="#ffff00"/>
<rect x="185" y="276" width="113" height="1" fill="#ff8040"/>
<rect x="297" y="276" width="1" height="18" fill="#ff8040"/>
<rect x="297" y="292" width="44" height="1" fill="#ff8040"/>
<rect x="297" y="293" width="43" height="1" fill="#ff8040"/>
<rect x="340" y="276" width="1" height="17" fill="#ff8040"/>
<rect x="340" y="276" width="16" height="1" fill="#ff8040"/>
<rect x="355" y="276" width="1" height="18" fill="#ff8040"/>
<rect x="355" y="292" width="30" height="1" fill="#ff8040"/>
<rect x="355" y="293" width="29" height="1" fill="#ff8040"/>
<rect x="384" y="276" width="1" height="17" fill="#ff8040"/>
<rect x="384" y="276" width="30" height="1" fill="#ff8040"/>
<rect x="413" y="276" width="1" height="18" fill="#ff8040"/>
<rect x="413" y="292" width="58" height="1" fill="#ff8040"/>
<rect x="413" y="293" width="57" height="1" fill="#ff8040"/>
<rect x="470" y="276" width="1" height="17" fill="#ff8040"/>
<rect x="470" y="276" width="30" height="1" fill="#ff8040"/>
<rect x="499" y="276" width="1" height="18" fill="#ff8040"/>
<rect x="499" y="292" width="59" height="1" fill="#ff8040"/>
<rect x="499" y="293" width="58" height="1" fill="#ff8040"/>
<rect x="557" y="276" width="1" height="17" fill="#ff8040"/>
<rect x="557" y="276" width="59" height="1" fill="#ff8040"/>
<rect x="615" y="276" width="1" height="18" fill="#ff8040"/>
<rect x="615" y="292" width="59" height="1" fill="#ff8040"/>
<rect x="615" y="293" width="58" height="1" fill="#ff8040"/>
<rect x="673" y="276" width="1" height="17" fill="#ff8040"/>
<rect x="673" y="276" width="29" height="1" fill="#ff8040"/>
<rect x="701" y="276" width="1" height="18" fill="#ff8040"/>
<rect x="701" y="292" width="59" height="1" fill="#ff8040"/>
<rect x="701" y="293" width="58" height="1" fill="#ff8040"/>
<rect x="759" y="276" width="1" height="17" fill="#ff8040"/>
<rect x="759" y="276" width="30" height="1" fill="#ff8040"/>
<rect x="788" y="276" width="1" height="18" fill="#ff8040"/>
<rect x="788" y="292" width="44" height="1" fill="#ff8040"/>
<rect x="788" y="293" width="43" height="1" fill="#ff8040"/>
<rect x="831" y="276" width="1" height="17" fill="#ff8040"/>
<rect x="831" y="276" width="15" height="1" fill="#ff8040"/>
<rect x="845" y="276" width="1" height="18" fill="#ff8040"/>
<rect x="845" y="292" width="30" height="1" fill="#ff8040"/>
<rect x="845" y="293" width="29" height="1" fill="#ff8040"/>
<rect x="874" y="276" width="1" height="17" fill="#ff8040"/>
<rect x="874" y="276" width="30" height="1" fill="#ff8040"/>
<rect x="903" y="276" width="1" height="18" fill="#ff8040"/>
<rect x="903" y="292" width="40" height="1" fill="#ff8040"/>
<rect x="903" y="293" width="40" height="1" fill="#ff8040"/>
<rect x="185" y="298" width="114" height="1" fill="#0080c0"/>
<rect x="298" y="298" width="1" height="18" fill="#0080c0"/>
<rect x="298" y="314" width="44" height="1" fill="#0080c0"/>
<rect x="298" y="315" width="43" height="1" fill="#0080c0"/>
<rect x="341" y="298" width="1" height="17" fill="#0080c0"/>
<rect x="341" y="298" width="73" height="1" fill="#0080c0"/>
<rect x="413" y="298" width="1" height="18" fill="#0080c0"/>
<rect x="413" y="314" width="59" height="1" fill="#0080c0"/>
<rect x="413" y="315" width="58" height="1" fill="#0080c0"/>
<rect x="471" y="298" width="1" height="17" fill="#0080c0"/>
<rect x="471" y="298" width="30" height="1" fill="#0080c0"/>
<rect x="500" y="298" width="1" height="18" fill="#0080c0"/>
<rect x="500" y="314" width="58" height="1" fill="#0080c0"/>
<rect x="500" y="315" width="57" height="1" fill="#0080c0"/>
<rect x="557" y="298" width="1" height="17" fill="#0080c0"/>
<rect x="557" y="298" width="232" height="1" fill="#0080c0"/>
<rect x="788" y="298" width="1" height="18" fill="#0080c0"/>
<rect x="788" y="314" width="44" height="1" fill="#0080c0"/>
<rect x="788" y="315" width="43" height="1" fill="#0080c0"/>
<rect x="831" y="298" width="1" height="17" fill="#0080c0"/>
<rect x="831" y="298" width="74" height="1" fill="#0080c0"/>
<rect x="904" y="298" width="1" height="18" fill="#0080c0"/>
<rect x="904" y="314" width="39" height="1" fill="#0080c0"/>
<rect x="904" y="315" width="39" height="1" fill="#0080c0"/>
<rect x="185" y="320" width="459" height="1" fill="#ff0000"/>
<rect x="643" y="320" width="1" height="18" fill="#ff0000"/>
<rect x="643" y="336" width="30" height="1" fill="#ff0000"/>
<rect x="643" y="337" width="29" height="1" fill="#ff0000"/>
<rect x="672" y="320" width="1" height="17" fill="#ff0000"/>
<rect x="672" y="320" width="59" height="1" fill="#ff0000"/>
<rect x="730" y="320" width="1" height="18" fill="#ff0000"/>
<rect x="730" y="336" width="30" height="1" fill="#ff0000"/>
<rect x="730" y="337" width="29" height="1" fill="#ff0000"/>
<rect x="759" y="320" width="1" height="17" fill="#ff0000"/>
<rect x="759" y="320" width="184" height="1" fill="#ff0000"/>
<rect x="185" y="419" width="759" height="1" fill="#ffffff"/>
<rect x="264" y="417" width="1" height="8" fill="#ffffff"/>
<rect x="346" y="417" width="1" height="8" fill="#ffffff"/>
<rect x="428" y="417" width="1" height="8" fill="#ffffff"/>
<rect x="510" y="417" width="1" height="8" fill="#ffffff"/>
<rect x="592" y="417" width="1" height="8" fill="#ffffff"/>
<rect x="674" y="417" width="1" height="8" fill="#ffffff"/>
<rect x="756" y="417" width="1" height="8" fill="#ffffff"/>
<rect x="838" y="417" width="1" height="8" fill="#ffffff"/>
<rect x="920" y="417" width="1" height="8" fill="#ffffff"/>
<rect x="183" y="76" width="2" height="368" fill="#0000ff"/>
<rect x="669" y="77" width="1" height="367" fill="#00ffff"/></svg>
<div class="lbl" style="top:77px;color:#0080c0">AB</div><div class="val" style="top:77px;color:#0080c0">F410h</div>
<div class="lbl" style="top:99px;color:#0080c0">DB</div><div class="val" style="top:99px;color:#0080c0">FFh</div>
<div class="lbl" style="top:121px;color:#c8c8c8">1. TAKT</div><div class="val" style="top:121px;color:#c8c8c8">1</div>
<div class="lbl" style="top:143px;color:#ff00ff">2. /M1</div><div class="val" style="top:143px;color:#ff00ff">1</div>
<div class="lbl" style="top:165px;color:#ff0080">3. /INT</div><div class="val" style="top:165px;color:#ff0080">1</div>
<div class="lbl" style="top:187px;color:#008000">4. MEI</div><div class="val" style="top:187px;color:#008000">1</div>
<div class="lbl" style="top:209px;color:#808040">5. /WAIT</div><div class="val" style="top:209px;color:#808040">1</div>
<div class="lbl" style="top:231px;color:#008040">6. IEI</div><div class="val" style="top:231px;color:#008040">1</div>
<div class="lbl" style="top:253px;color:#ffff00">23. /IORQ</div><div class="val" style="top:253px;color:#ffff00">1</div>
<div class="lbl" style="top:275px;color:#ff8040">24. /MREQ</div><div class="val" style="top:275px;color:#ff8040">1</div>
<div class="lbl" style="top:297px;color:#0080c0">25. /RD</div><div class="val" style="top:297px;color:#0080c0">1</div>
<div class="lbl" style="top:319px;color:#ff0000">26. /WR</div><div class="val" style="top:319px;color:#ff0000">1</div>
<div class="bt" style="left:184.5px;top:80px">F410h</div>
<div class="bt" style="left:275.5px;top:80px">F407h</div>
<div class="bt" style="left:345.5px;top:80px">0162h</div>
<div class="bt" style="left:401.5px;top:80px">F408h</div>
<div class="bt" style="left:487.5px;top:80px">F409h</div>
<div class="bt" style="left:603.5px;top:80px">01AFh</div>
<div class="bt" style="left:690.5px;top:80px">01AEh</div>
<div class="bt" style="left:776.5px;top:80px">E37Fh</div>
<div class="bt" style="left:834.5px;top:80px">0163h</div>
<div class="bt" style="left:892.5px;top:80px">E380h</div>
<div class="bt" style="left:184.5px;top:102px">FFh</div>
<div class="bt" style="left:305.5px;top:102px">CDh</div>
<div class="bt" style="left:366.5px;top:102px">FFh</div>
<div class="bt" style="left:420.5px;top:102px">7Fh</div>
<div class="bt" style="left:508.5px;top:102px">E3h</div>
<div class="bt" style="left:582.5px;top:102px">FFh</div>
<div class="bt" style="left:620.5px;top:102px">F4h</div>
<div class="bt" style="left:706.5px;top:102px">0Ah</div>
<div class="bt" style="left:797.0px;top:102px">CDh</div>
<div class="bt" style="left:856.5px;top:102px">FFh</div>
<div class="bt" style="left:911.5px;top:102px">74h</div>
<div class="tk" style="left:182.8px;width:auto;text-align:left;transform-origin:0 0;clip-path:inset(0 0 0 2.6px)">0 s</div>
<div class="tk" style="left:234.5px">2 us</div>
<div class="tk" style="left:316.5px">3 us</div>
<div class="tk" style="left:398.5px">5 us</div>
<div class="tk" style="left:480.5px">6 us</div>
<div class="tk" style="left:562.5px">8 us</div>
<div class="tk" style="left:644.5px">10 us</div>
<div class="tk" style="left:726.5px">11 us</div>
<div class="tk" style="left:808.5px">13 us</div>
<div class="tk" style="left:890.5px">14 us</div>
<div class="abs" id="below"></div>
<div class="abs" style="left:7px;top:446px;width:1px;height:42px;background:#808080"></div>
<div class="abs" style="left:176px;top:446px;width:1px;height:42px;background:#808080"></div>
<div class="abs" style="left:180px;top:455px;font-size:11px;line-height:13px;white-space:nowrap;letter-spacing:-0.17px;">Position: 0.0%</div>
<!-- scrollbar -->
<div class="abs" style="left:178px;top:473px;width:770px;height:1px;background:#a0a0a0"></div>
<div class="abs" style="left:7px;top:489px;width:941px;height:2px;background:linear-gradient(#f6f6f6,#fff)"></div>
<svg class="abs" style="left:177px;top:474px" width="771" height="14" viewBox="177 474 771 14" shape-rendering="crispEdges">
<rect x="178" y="474" width="16" height="14" fill="#f0f0f0"/><rect x="178" y="474" width="16" height="1" fill="#fff"/><rect x="178" y="474" width="1" height="14" fill="#fff"/><rect x="178" y="487" width="16" height="1" fill="#696969"/><rect x="193" y="474" width="1" height="14" fill="#696969"/><rect x="179" y="486" width="14" height="1" fill="#a0a0a0"/><rect x="192" y="475" width="1" height="12" fill="#a0a0a0"/>
<path d="M187.500 477.500v6l-3.500-3z" fill="#000" shape-rendering="auto"/>
<rect x="194" y="474" width="7" height="14" fill="#f0f0f0"/><rect x="194" y="474" width="1" height="14" fill="#a0a0a0"/><rect x="195" y="474" width="1" height="14" fill="#ff0000"/><rect x="196" y="474" width="4" height="1" fill="#fff"/><rect x="199" y="475" width="1" height="12" fill="#a0a0a0"/><rect x="200" y="474" width="1" height="14" fill="#696969"/><rect x="194" y="487" width="7" height="1" fill="#696969"/>
<rect x="932" y="474" width="15" height="14" fill="#f0f0f0"/><rect x="932" y="474" width="15" height="1" fill="#fff"/><rect x="932" y="474" width="1" height="14" fill="#fff"/><rect x="932" y="487" width="15" height="1" fill="#696969"/><rect x="946" y="474" width="1" height="14" fill="#696969"/><rect x="933" y="486" width="13" height="1" fill="#a0a0a0"/><rect x="945" y="475" width="1" height="12" fill="#a0a0a0"/>
<path d="M938 477.500v6l3.500-3z" fill="#000" shape-rendering="auto"/>
</svg>
<!-- status bar -->
<div class="abs" style="left:7px;top:491px;width:941px;height:1px;background:#a0a0a0"></div>
<div class="sf" style="left:7px;width:134px;padding-left:0px;letter-spacing:-0.33px;">FW 0.0(TA) Ready ...</div>
<div class="sf" style="left:143px;width:170px;padding-left:1px;color:#0000ff;font-weight:bold;white-space:pre;letter-spacing:-0.1px;">1: 0  (0.00s)</div>
<div class="sf" style="left:314px;width:167px;padding-left:0px;color:#2020e0;white-space:pre;letter-spacing:-0.42px;">2: 0  (0.00s)</div>
<div class="sf" style="left:483px;width:199px;padding-left:1px;white-space:pre;letter-spacing:-0.18px;">Diff.: 0  (0.00s)</div>
<div class="sf" style="left:684px;width:245px;"></div>
<svg class="abs" style="left:932px;top:493px" width="15" height="15" viewBox="0 0 15 15" shape-rendering="auto">
<path d="M2 14L14 2M6 14L14 6M10 14L14 10" stroke="#a0a0a0" stroke-width="1.200"/>
<path d="M3 14L14 3M7 14L14 7M11 14L14 11" stroke="#fff" stroke-width="1"/>
</svg>


</body></html>
